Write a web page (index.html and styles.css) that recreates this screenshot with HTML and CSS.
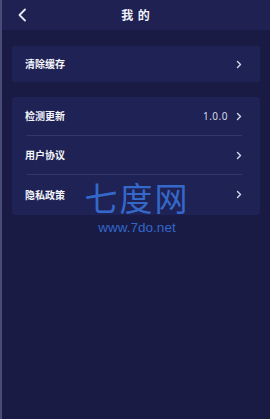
FILE: index.html
```html
<!DOCTYPE html>
<html lang="zh">
<head>
<meta charset="utf-8">
<link rel="stylesheet" href="styles.css">
</head>
<body>
<div class="page">
  <header class="topbar">
    <svg class="back" width="10" height="14" viewBox="0 0 10 14"><polyline points="8,1.5 2.5,7 8,12.5" fill="none" stroke="#e8eaf5" stroke-width="1.8" stroke-linecap="round" stroke-linejoin="round"/></svg>
    <div class="title">我 的</div>
  </header>
  <section class="card single">
    <div class="row"><span class="label">清除缓存</span><span class="right"><svg class="chev" width="6" height="9" viewBox="0 0 6 9"><polyline points="1.5,1.5 4.5,4.5 1.5,7.5" fill="none" stroke="#d8dbec" stroke-width="1.4" stroke-linecap="round" stroke-linejoin="round"/></svg></span></div>
  </section>
  <section class="card multi">
    <div class="row line"><span class="label">检测更新</span><span class="right"><span class="val">1.0.0</span><svg class="chev" width="6" height="9" viewBox="0 0 6 9"><polyline points="1.5,1.5 4.5,4.5 1.5,7.5" fill="none" stroke="#d8dbec" stroke-width="1.4" stroke-linecap="round" stroke-linejoin="round"/></svg></span></div>
    <div class="row line"><span class="label">用户协议</span><span class="right"><svg class="chev" width="6" height="9" viewBox="0 0 6 9"><polyline points="1.5,1.5 4.5,4.5 1.5,7.5" fill="none" stroke="#d8dbec" stroke-width="1.4" stroke-linecap="round" stroke-linejoin="round"/></svg></span></div>
    <div class="row"><span class="label">隐私政策</span><span class="right"><svg class="chev" width="6" height="9" viewBox="0 0 6 9"><polyline points="1.5,1.5 4.5,4.5 1.5,7.5" fill="none" stroke="#d8dbec" stroke-width="1.4" stroke-linecap="round" stroke-linejoin="round"/></svg></span></div>
  </section>
  <div class="watermark">
    <div class="wm-big">七度网</div>
    <div class="wm-small">www.7do.net</div>
  </div>
</div>
</body>
</html>
```
FILE: styles.css
```css
html, body {
  margin: 0;
  padding: 0;
  background: #191b44;
}
.page {
  position: relative;
  width: 270px;
  height: 419px;
  box-sizing: border-box;
  border-left: 2px solid #4a4c78;
  background: #191b44;
  font-family: "Noto Sans CJK SC", "Noto Sans", sans-serif;
  color: #f2f3fa;
  overflow: hidden;
}
.topbar {
  position: relative;
  height: 30px;
  background: #1e2152;
  display: flex;
  align-items: center;
  justify-content: center;
}
.back {
  position: absolute;
  left: 15px;
  top: 8px;
}
.title {
  font-size: 12px;
  font-weight: 700;
  letter-spacing: 1px;
  line-height: 1;
  margin-top: -1px;
}
.card {
  margin: 0 10px 0 10px;
  background: #1f2254;
  border-radius: 3px;
  padding: 0 18px 0 13px;
}
.card.single {
  margin-top: 16px;
  height: 36px;
  display: flex;
  flex-direction: column;
}
.card.single .row {
  height: 36px;
}
.card.multi {
  margin-top: 15px;
  padding-bottom: 1px;
}
.row {
  height: 39px;
  display: flex;
  align-items: center;
  justify-content: space-between;
  box-sizing: border-box;
}
.row.line {
  border-bottom: 1px solid #343868;
  margin: 0 0 0 2px;
}
.multi .row .label {
  margin-left: -2px;
}
.multi .row:last-child .label {
  margin-left: 0;
}
.label {
  font-size: 10px;
  font-weight: 700;
  line-height: 1;
  color: #f4f5fb;
}
.right {
  display: flex;
  align-items: center;
  gap: 8px;
}
.val {
  font-family: "Noto Sans", sans-serif;
  font-size: 10px;
  color: #d6d8e8;
  letter-spacing: 0.5px;
  line-height: 1;
}
.chev {
  display: block;
}
.watermark {
  position: absolute;
  left: 80px;
  top: 180px;
  width: 110px;
  display: flex;
  flex-direction: column;
  align-items: center;
  gap: 7px;
  opacity: 0.8;
  pointer-events: none;
}
.wm-big {
  font-family: "Noto Sans CJK SC", sans-serif;
  font-weight: 400;
  font-size: 33px;
  line-height: 34px;
  letter-spacing: 2px;
  color: #3a7be8;
}
.wm-small {
  font-family: "Liberation Sans", Arial, sans-serif;
  font-size: 13.5px;
  line-height: 13px;
  color: #3a7be8;
}
```
